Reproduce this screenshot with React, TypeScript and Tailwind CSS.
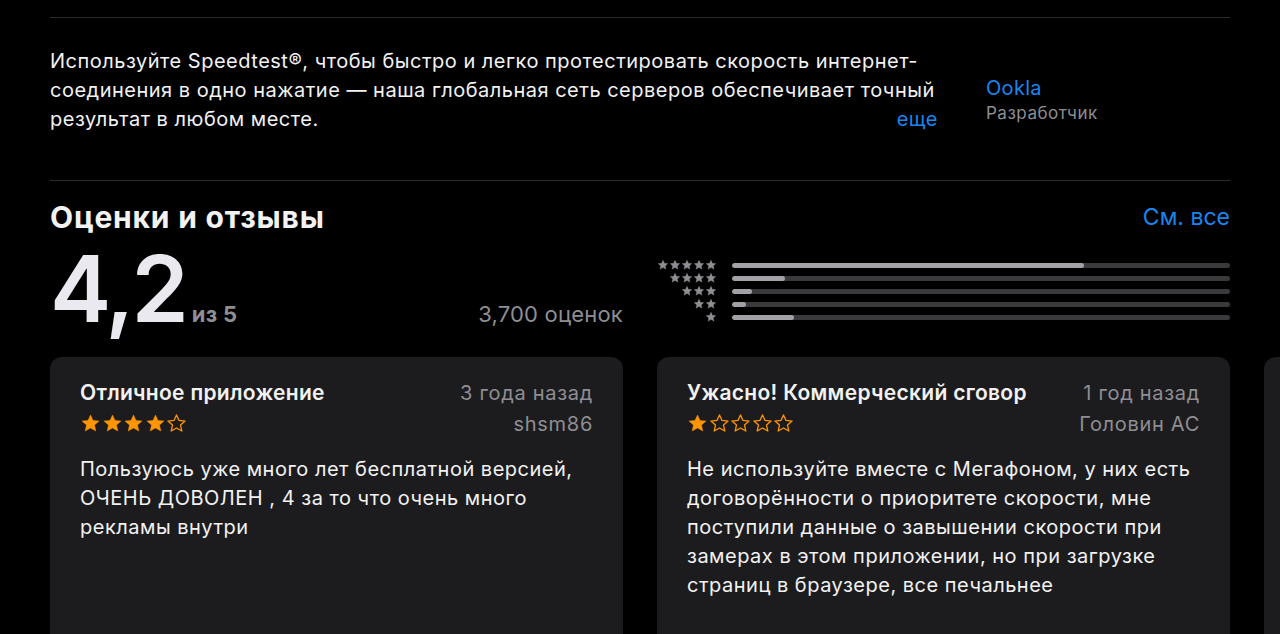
import React from "react";

const STAR = "M12 2.2l2.9 6.3 6.9.7-5.2 4.6 1.5 6.8L12 17.1l-6.1 3.5 1.5-6.8-5.2-4.6 6.9-.7z";

function Star({ filled, size, color }: { filled: boolean; size: number; color: string }) {
  return (
    <svg width={size} height={size} viewBox="0 0 24 24">
      <path
        d={STAR}
        fill={filled ? color : "none"}
        stroke={color}
        strokeWidth={filled ? 0.5 : 1.5}
        strokeLinejoin="round"
      />
    </svg>
  );
}

const bars = [
  { stars: 5, pct: 70.7 },
  { stars: 4, pct: 10.6 },
  { stars: 3, pct: 4 },
  { stars: 2, pct: 2.8 },
  { stars: 1, pct: 12.4 },
];

const reviews = [
  {
    title: "Отличное приложение",
    date: "3 года назад",
    author: "shsm86",
    rating: 4,
    text: "Пользуюсь уже много лет бесплатной версией, ОЧЕНЬ ДОВОЛЕН , 4 за то что очень много рекламы внутри",
  },
  {
    title: "Ужасно! Коммерческий сговор",
    date: "1 год назад",
    author: "Головин АС",
    rating: 1,
    text: "Не используйте вместе с Мегафоном, у них есть договорённости о приоритете скорости, мне поступили данные о завышении скорости при замерах в этом приложении, но при загрузке страниц в браузере, все печальнее",
  },
  { title: "", date: "", author: "", rating: 0, text: "" },
];

export default function App() {
  return (
    <div
      className="min-h-screen h-[634px] overflow-hidden bg-black px-[50px] text-white"
      style={{ fontFamily: "Inter, 'Noto Sans', sans-serif" }}
    >
      <div className="pt-[17px]">
        <div className="h-px bg-[#2b2b2d]" />
      </div>

      {/* Описание */}
      <div className="flex h-[162px] pt-[29px]">
        <div className="w-[888px] shrink-0">
          <p className="text-[20px] leading-[29px] tracking-[0.5px] text-[#f2f2f2]">
            Используйте Speedtest®, чтобы быстро и легко протестировать скорость интернет-соединения в одно нажатие — наша
            глобальная сеть серверов обеспечивает точный результат в любом месте.
            <span className="float-right text-[#1a86f0]">еще</span>
          </p>
        </div>
        <div className="ml-[48px] pt-[28px]">
          <div className="text-[20px] leading-[26px] tracking-[0.3px] text-[#1a86f0]">Ookla</div>
          <div className="text-[17px] leading-[24px] tracking-[0.5px] text-[#8e8e93]">Разработчик</div>
        </div>
      </div>

      <div className="h-px bg-[#2b2b2d]" />

      {/* Заголовок */}
      <div className="flex items-center justify-between pt-[18px]">
        <h2 className="text-[30px] font-bold leading-[36px] tracking-[0.8px] text-[#f2f2f2]">Оценки и отзывы</h2>
        <span className="text-[23px] leading-[30px] text-[#1a86f0]">См. все</span>
      </div>

      {/* Рейтинг */}
      <div className="flex h-[122px]">
        <div className="flex w-[573px] shrink-0 flex-col justify-end pb-[22px]">
          <div className="flex items-baseline justify-between">
            <div className="flex items-baseline">
              <span className="text-[92px] font-semibold leading-[92px] tracking-[-3px] text-[#e9e9ef]">4,2</span>
              <span className="ml-[6px] text-[22px] font-bold leading-[22px] tracking-[0.3px] text-[#8e8e93]">из 5</span>
            </div>
            <span className="text-[22px] leading-[22px] tracking-[0.2px] text-[#8e8e93]">3,700 оценок</span>
          </div>
        </div>
        <div className="ml-[34px] flex flex-1 flex-col gap-[7px] pt-[27px]">
          {bars.map((b) => (
            <div key={b.stars} className="flex h-[6px] items-center">
              <div className="flex w-[60px] justify-end">
                {Array.from({ length: b.stars }).map((_, i) => (
                  <Star key={i} filled size={12} color="#8e8e93" />
                ))}
              </div>
              <div className="ml-[15px] h-[5px] flex-1 overflow-hidden rounded-full bg-[#3a3a3c]">
                <div className="h-full rounded-full bg-[#a1a1a6]" style={{ width: `${b.pct}%` }} />
              </div>
            </div>
          ))}
        </div>
      </div>

      {/* Отзывы */}
      <div className="flex gap-[34px]">
        {reviews.map((r, idx) => (
          <div key={idx} className="h-[300px] w-[573px] shrink-0 rounded-[12px] bg-[#1c1c1e] px-[30px] pt-[22px]">
            {r.title && (
              <>
                <div className="flex justify-between">
                  <div>
                    <div className="text-[21px] font-semibold leading-[28px] tracking-[0.3px] text-[#f2f2f2]">{r.title}</div>
                    <div className="mt-[6px] flex gap-[0.5px]">
                      {Array.from({ length: 5 }).map((_, i) => (
                        <Star key={i} filled={i < r.rating} size={21} color="#ff9500" />
                      ))}
                    </div>
                  </div>
                  <div className="-mt-[1px] text-right text-[20px] leading-[31px] tracking-[0.7px] text-[#8e8e93]">
                    <div>{r.date}</div>
                    <div>{r.author}</div>
                  </div>
                </div>
                <p className="mt-[15px] text-[20px] leading-[29px] tracking-[0.5px] text-[#f2f2f2]">{r.text}</p>
              </>
            )}
          </div>
        ))}
      </div>
    </div>
  );
}
